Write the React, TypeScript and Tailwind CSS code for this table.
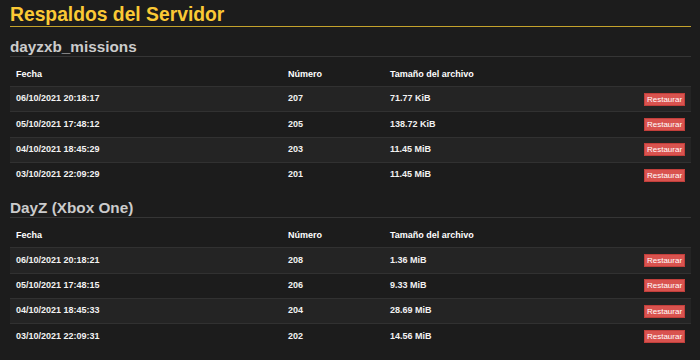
import React from "react";

type Row = { fecha: string; num: string; size: string };

const sections: { name: string; rows: Row[] }[] = [
  {
    name: "dayzxb_missions",
    rows: [
      { fecha: "06/10/2021 20:18:17", num: "207", size: "71.77 KiB" },
      { fecha: "05/10/2021 17:48:12", num: "205", size: "138.72 KiB" },
      { fecha: "04/10/2021 18:45:29", num: "203", size: "11.45 MiB" },
      { fecha: "03/10/2021 22:09:29", num: "201", size: "11.45 MiB" },
    ],
  },
  {
    name: "DayZ (Xbox One)",
    rows: [
      { fecha: "06/10/2021 20:18:21", num: "208", size: "1.36 MiB" },
      { fecha: "05/10/2021 17:48:15", num: "206", size: "9.33 MiB" },
      { fecha: "04/10/2021 18:45:33", num: "204", size: "28.69 MiB" },
      { fecha: "03/10/2021 22:09:31", num: "202", size: "14.56 MiB" },
    ],
  },
];

function Section({ name, rows, first }: { name: string; rows: Row[]; first: boolean }) {
  return (
    <div className={first ? "mt-[11px]" : "mt-[12px]"}>
      <h2 className="text-[15.3px] leading-[18px] font-bold text-[#cbcbcb] border-b border-[#353535]">
        {name}
      </h2>
      <div className="mt-[6px]">
        <div className="grid grid-cols-[272px_102px_1fr_auto] h-[23px] items-center text-[9px] font-bold text-white">
          <div className="pl-[6px]">Fecha</div>
          <div className="pl-[6px]">Número</div>
          <div className="pl-[6px]">Tamaño del archivo</div>
          <div />
        </div>
        {rows.map((r, i) => (
          <div
            key={r.fecha}
            className={
              "grid grid-cols-[272px_102px_1fr_auto] h-[25.33px] items-center border-t border-[#313131] text-[9px] font-bold text-[#f2f2f2] " +
              (i % 2 === 0 ? "bg-[#242424]" : "bg-[#1c1c1c]")
            }
          >
            <div className="pl-[6px]">{r.fecha}</div>
            <div className="pl-[6px]">{r.num}</div>
            <div className="pl-[6px]">{r.size}</div>
            <div className="pr-[6px] flex">
              <button className="h-[13px] w-[41px] bg-[#d9534f] border border-[#c23f3b] text-white text-[8px] font-normal leading-[11px] flex items-center justify-center">
                Restaurar
              </button>
            </div>
          </div>
        ))}
      </div>
    </div>
  );
}

export default function App() {
  return (
    <div
      className="min-h-[360px] w-[700px] bg-[#1c1c1c] pl-[10px] pr-[9px] pt-[4px]"
      style={{ fontFamily: '"Liberation Sans", Arial, sans-serif' }}
    >
      <h1 className="text-[19.3px] leading-[22px] font-bold text-[#fbc935] border-b border-[#c4a22c]">
        Respaldos del Servidor
      </h1>
      {sections.map((s, i) => (
        <Section key={s.name} name={s.name} rows={s.rows} first={i === 0} />
      ))}
    </div>
  );
}
